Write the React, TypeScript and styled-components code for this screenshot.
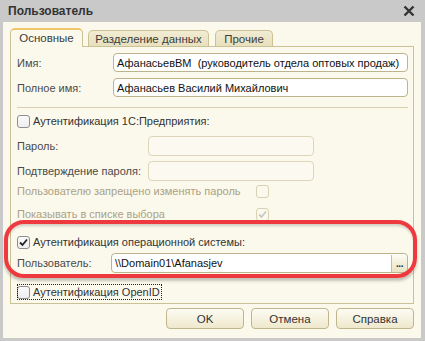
import React from "react";
import styled, { createGlobalStyle, css } from "styled-components";

const Global = createGlobalStyle`
  html, body { margin: 0; padding: 0; background: #fff; }
  body { font-family: "Liberation Sans", Arial, sans-serif; font-size: 11px; }
  * { box-sizing: border-box; }
`;

const Frame = styled.div`
  position: relative;
  width: 425px;
  height: 341px;
  background: #c9c9c9;
  padding: 0 4px 3px 3px;
  display: flex;
  flex-direction: column;
`;

const TitleBar = styled.div`
  height: 22px;
  display: flex;
  align-items: center;
  justify-content: space-between;
  padding: 0 6px 0 5px;
  font-weight: bold;
  font-size: 12px;
  color: #333;
`;

const Body = styled.div`
  flex: 1;
  background: #fbf9ec;
  display: flex;
  flex-direction: column;
  padding: 6px 7px 0 7px;
`;

const TabStrip = styled.div`
  display: flex;
  align-items: flex-end;
  height: 18px;
  position: relative;
  z-index: 1;
`;

const Tab = styled.div<{ $active?: boolean; $w: number; $gap: number }>`
  width: ${(p) => p.$w}px;
  margin-right: ${(p) => p.$gap}px;
  display: flex;
  align-items: center;
  justify-content: center;
  color: #3c3c3c;
  font-size: 11.5px;
  border: 1px solid #cbc196;
  border-bottom: none;
  border-radius: 5px 5px 0 0;
  ${(p) =>
    p.$active
      ? css`
          height: 19px;
          margin-bottom: -1px;
          background: #fbf9ec;
          border-top: 2px solid #efc76a;
          padding-bottom: 1px;
        `
      : css`
          height: 16px;
          background: linear-gradient(#f1ecd3, #e8e0bd);
        `}
`;

const Panel = styled.div`
  border: 1px solid #cbc196;
  display: flex;
  flex-direction: column;
  padding: 0 5px 3px 6px;
`;

const Row = styled.div<{ $mt: number; $h: number }>`
  display: flex;
  align-items: center;
  margin-top: ${(p) => p.$mt}px;
  height: ${(p) => p.$h}px;
`;

const Label = styled.div<{ $w: number; $muted?: boolean }>`
  width: ${(p) => p.$w}px;
  flex-shrink: 0;
  color: ${(p) => (p.$muted ? "#aaa186" : "#4a4a4a")};
  white-space: nowrap;
`;

const Input = styled.div<{ $w?: number; $disabled?: boolean }>`
  ${(p) => (p.$w ? `width: ${p.$w}px;` : "flex: 1;")}
  height: 100%;
  display: flex;
  align-items: center;
  padding: 0 3px;
  border-radius: 4px;
  border: 1px solid ${(p) => (p.$disabled ? "#ddd6ba" : "#bdb38c")};
  background: ${(p) => (p.$disabled ? "#fcfaf0" : "#ffffff")};
  color: #111;
  white-space: nowrap;
  overflow: hidden;
`;

const InputText = styled.span`
  flex: 1;
`;

const DotsButton = styled.div`
  width: 16px;
  height: 17px;
  margin-right: -3px;
  border-left: 1px solid #c9bf98;
  border-radius: 0 3px 3px 0;
  background: linear-gradient(#fdfbf1, #e9e2c4);
  display: flex;
  align-items: flex-end;
  justify-content: center;
  padding-bottom: 3px;
  font-size: 10px;
  letter-spacing: -0.5px;
  line-height: 1;
  color: #333;
  font-weight: bold;
`;

const Separator = styled.div`
  margin-top: 10px;
  height: 1px;
  background: #d8d0ae;
`;

const Box = styled.span<{ $muted?: boolean }>`
  width: 13px;
  height: 13px;
  flex-shrink: 0;
  border-radius: 3px;
  border: 1px solid ${(p) => (p.$muted ? "#d8d1b4" : "#8e8e8e")};
  background: ${(p) => (p.$muted ? "#fbf9ec" : "linear-gradient(#fafafa, #eeeeee)")};
  display: flex;
  align-items: center;
  justify-content: center;
`;

const CheckLabel = styled.span<{ $focus?: boolean }>`
  display: inline-flex;
  align-items: center;
  gap: 3px;
  height: 16px;
  color: #333;
  white-space: nowrap;
  ${(p) =>
    p.$focus &&
    css`
      outline: 1px dotted #222;
      outline-offset: -1px;
      padding-right: 2px;
    `}
`;

const Buttons = styled.div`
  display: flex;
  justify-content: flex-end;
  gap: 7px;
  margin-top: 4px;
`;

const Button = styled.div`
  width: 78px;
  height: 21px;
  border: 1px solid #c0b68e;
  border-radius: 4px;
  background: linear-gradient(#fdfcf4, #efe8cc);
  display: flex;
  align-items: center;
  justify-content: center;
  color: #333;
  font-size: 11.5px;
`;

const Highlight = styled.div`
  position: absolute;
  left: 4px;
  top: 220px;
  width: 413px;
  height: 58px;
  border: 4px solid #ee3a3e;
  border-radius: 20px;
  box-shadow: 0 3px 3px rgba(0, 0, 0, 0.22), inset 0 3px 3px -1px rgba(0, 0, 0, 0.18);
  pointer-events: none;
`;

const Check = ({ color = "#222" }: { color?: string }) => (
  <svg width="11" height="11" viewBox="0 0 11 11">
    <path d="M2 5.5 L4.5 8 L9 2.5" fill="none" stroke={color} strokeWidth="1.8" />
  </svg>
);

const CloseIcon = () => (
  <svg width="12" height="12" viewBox="0 0 12 12">
    <path d="M1.5 1.5 L10.5 10.5 M10.5 1.5 L1.5 10.5" stroke="#333" strokeWidth="2.4" />
  </svg>
);

export default function App() {
  return (
    <>
      <Global />
      <Frame>
        <TitleBar>
          <span>Пользователь</span>
          <CloseIcon />
        </TitleBar>
        <Body>
          <TabStrip>
            <Tab $active $w={73} $gap={5}>Основные</Tab>
            <Tab $w={121} $gap={6}>Разделение данных</Tab>
            <Tab $w={58} $gap={0}>Прочие</Tab>
          </TabStrip>
          <Panel>
            <Row $mt={6} $h={19}>
              <Label $w={96}>Имя:</Label>
              <Input>АфанасьевВМ&nbsp; (руководитель отдела оптовых продаж)</Input>
            </Row>
            <Row $mt={6} $h={19}>
              <Label $w={96}>Полное имя:</Label>
              <Input>Афанасьев Василий Михайлович</Input>
            </Row>
            <Separator />
            <Row $mt={5} $h={16}>
              <CheckLabel>
                <Box />
                Аутентификация 1С:Предприятия:
              </CheckLabel>
            </Row>
            <Row $mt={7} $h={20}>
              <Label $w={131}>Пароль:</Label>
              <Input $w={166} $disabled />
            </Row>
            <Row $mt={5} $h={20}>
              <Label $w={131}>Подтверждение пароля:</Label>
              <Input $w={166} $disabled />
            </Row>
            <Row $mt={2} $h={16}>
              <Label $w={239} $muted>Пользователю запрещено изменять пароль</Label>
              <Box $muted />
            </Row>
            <Row $mt={7} $h={16}>
              <Label $w={239} $muted>Показывать в списке выбора</Label>
              <Box $muted>
                <Check color="#c9c9c9" />
              </Box>
            </Row>
            <Row $mt={12} $h={16}>
              <CheckLabel>
                <Box>
                  <Check />
                </Box>
                Аутентификация операционной системы:
              </CheckLabel>
            </Row>
            <Row $mt={3} $h={20}>
              <Label $w={94}>Пользователь:</Label>
              <Input>
                <InputText>\\Domain01\Afanasjev</InputText>
                <DotsButton>...</DotsButton>
              </Input>
            </Row>
            <Row $mt={11} $h={16}>
              <CheckLabel $focus>
                <Box />
                Аутентификация OpenID
              </CheckLabel>
            </Row>
          </Panel>
          <Buttons>
            <Button>OK</Button>
            <Button>Отмена</Button>
            <Button>Справка</Button>
          </Buttons>
        </Body>
        <Highlight />
      </Frame>
    </>
  );
}
